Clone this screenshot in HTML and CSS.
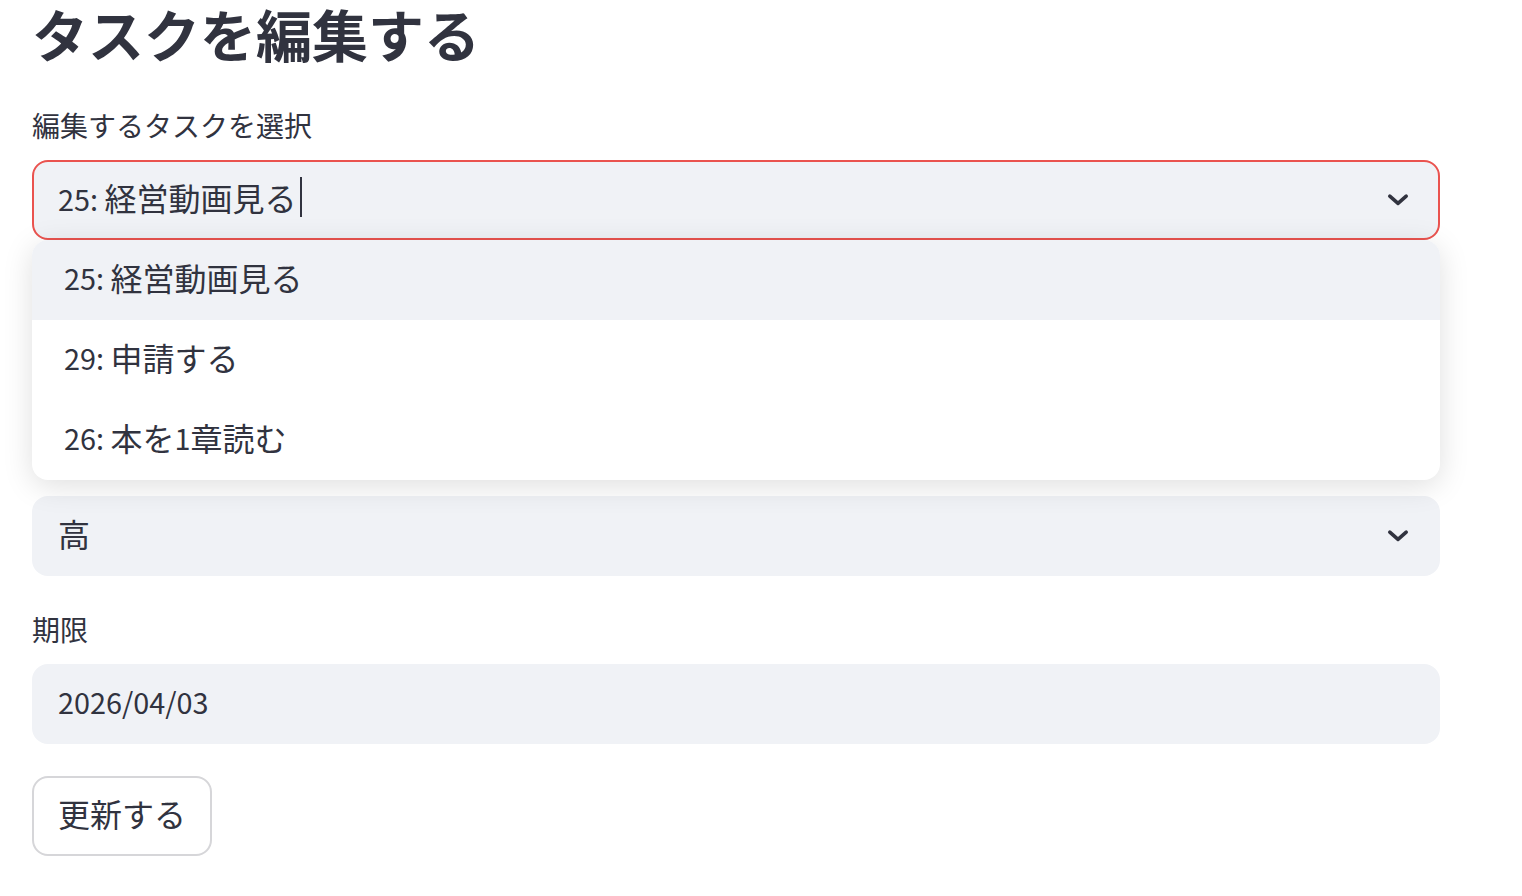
FILE: index.html
```html
<!DOCTYPE html>
<html lang="ja">
<head>
  <meta charset="utf-8">
  <title>タスクを編集する</title>
  <link rel="stylesheet" href="styles.css">
</head>
<body>
  <div class="main">
    <h1 class="title">タスクを編集する</h1>

    <div class="field">
      <label class="label">編集するタスクを選択</label>
      <div class="select-wrap">
        <div class="control select focused">
          <span class="value"><span class="latin">25: </span>経営動画見る</span><span class="caret"></span>
          <svg class="chevron" width="24" height="24" viewBox="0 0 24 24">
            <path d="M3.8 8.2 L12 15.4 L20.2 8.2" fill="none" stroke="#31333F" stroke-width="3.6" stroke-linecap="round" stroke-linejoin="round"/>
          </svg>
        </div>
        <ul class="menu">
          <li class="option active"><span class="latin">25: </span>経営動画見る</li>
          <li class="option"><span class="latin">29: </span>申請する</li>
          <li class="option"><span class="latin">26: </span>本を<span class="latin">1</span>章読む</li>
        </ul>
      </div>
    </div>

    <!-- covered by the open menu -->
    <div class="field covered">
      <label class="label">タスク名</label>
      <div class="control">
        <span class="value">経営動画見る</span>
      </div>
    </div>

    <div class="field">
      <label class="label covered">優先度</label>
      <div class="control select">
        <span class="value">高</span>
        <svg class="chevron" width="24" height="24" viewBox="0 0 24 24">
          <path d="M3.8 8.2 L12 15.4 L20.2 8.2" fill="none" stroke="#31333F" stroke-width="3.6" stroke-linecap="round" stroke-linejoin="round"/>
        </svg>
      </div>
    </div>

    <div class="field">
      <label class="label">期限</label>
      <div class="control">
        <span class="value latin">2026/04/03</span>
      </div>
    </div>

    <div>
      <button class="button">更新する</button>
    </div>
  </div>
</body>
</html>
```

FILE: styles.css
```css
body {
  margin: 0;
  background-color: #ffffff;
  color: #31333F;
  font-family: "Noto Sans CJK JP", "Noto Sans", sans-serif;
}

.main {
  width: 1408px;
  padding-left: 32px;
  display: flex;
  flex-direction: column;
  gap: 32px;
}

.title {
  margin: 0 0 6px 0;
  font-size: 56px;
  line-height: 66px;
  font-weight: 700;
}

.field {
  display: flex;
  flex-direction: column;
}

.covered {
  visibility: hidden;
}

.label {
  font-size: 28px;
  line-height: 42px;
  margin-bottom: 14px;
}

.select-wrap {
  position: relative;
}

.control {
  box-sizing: border-box;
  height: 80px;
  display: flex;
  align-items: center;
  padding: 0 28px 6px 24px;
  background-color: #F0F2F6;
  border: 2px solid #F0F2F6;
  border-radius: 16px;
  font-size: 32px;
}

.control.focused {
  border-color: #EA534F;
}

.latin {
  font-size: 0.9em;
}

.value {
  white-space: nowrap;
}

.caret {
  display: inline-block;
  width: 2px;
  height: 40px;
  margin-left: 4px;
  background-color: #31333F;
}

.chevron {
  margin-left: auto;
  margin-top: 6px;
}

.menu {
  position: absolute;
  top: 100%;
  left: 0;
  right: 0;
  margin: 0;
  padding: 0;
  list-style: none;
  background-color: #ffffff;
  border-radius: 16px;
  box-shadow: 0 6px 30px rgba(0, 0, 0, 0.13);
  overflow: hidden;
  z-index: 10;
}

.option {
  box-sizing: border-box;
  height: 80px;
  display: flex;
  align-items: center;
  padding: 0 0 6px 32px;
  font-size: 32px;
  white-space: pre;
}

.option.active {
  background-color: #F0F2F6;
}

.button {
  box-sizing: border-box;
  height: 80px;
  padding: 0 24px 6px 24px;
  background-color: #ffffff;
  color: #31333F;
  border: 2px solid #D6D6D9;
  border-radius: 16px;
  font-family: inherit;
  font-size: 32px;
}
```
